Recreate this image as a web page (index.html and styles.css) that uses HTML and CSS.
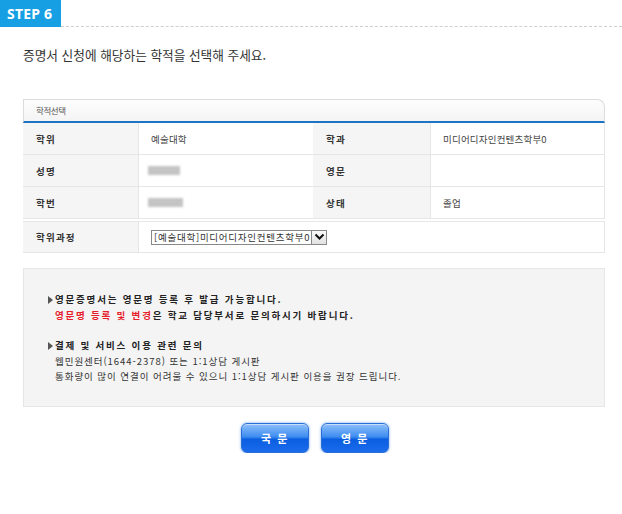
FILE: index.html
```html
<!DOCTYPE html>
<html lang="ko">
<head>
<meta charset="utf-8">
<link rel="stylesheet" href="styles.css">
</head>
<body>
<div class="step-head">
  <div class="badge">STEP 6</div>
  <div class="dash"></div>
</div>
<p class="title">증명서 신청에 해당하는 학적을 선택해 주세요.</p>

<div class="panel">
  <div class="panel-head">학적선택</div>
  <div class="grid">
    <div class="lab">학위</div><div class="val">예술대학</div>
    <div class="lab">학과</div><div class="val">미디어디자인컨텐츠학부0</div>
    <div class="lab">성명</div><div class="val"><span class="blur b1"></span></div>
    <div class="lab">영문</div><div class="val"></div>
    <div class="lab">학번</div><div class="val"><span class="blur b2"></span></div>
    <div class="lab">상태</div><div class="val">졸업</div>
  </div>
  <div class="course">
    <div class="lab">학위과정</div>
    <div class="val">
      <div class="select"><span class="sel-text">[예술대학]미디어디자인컨텐츠학부0</span><span class="sel-btn"><svg width="11" height="8" viewBox="0 0 11 8"><path d="M1.5 1.5 L5.5 5.5 L9.5 1.5" fill="none" stroke="#111" stroke-width="2"/></svg></span></div>
    </div>
  </div>
</div>

<div class="info">
  <p class="bullet strong">영문증명서는 영문명 등록 후 발급 가능합니다.</p>
  <p class="strong"><span class="red">영문명 등록 및 변경</span>은 학교 담당부서로 문의하시기 바랍니다.</p>
  <p class="bullet strong gap">결제 및 서비스 이용 관련 문의</p>
  <p>웹민원센터(1644-2378) 또는 1:1상담 게시판</p>
  <p>통화량이 많이 연결이 어려울 수 있으니 1:1상담 게시판 이용을 권장 드립니다.</p>
</div>

<div class="buttons">
  <button class="btn">국 문</button>
  <button class="btn">영 문</button>
</div>
</body>
</html>
```

FILE: styles.css
```css
* { box-sizing: border-box; }
body {
  margin: 0;
  background: #fff;
  font-family: "Noto Sans CJK KR", "Noto Sans", sans-serif;
  color: #333;
}
.step-head {
  display: flex;
  align-items: flex-end;
  height: 27px;
}
.badge {
  width: 61px;
  height: 27px;
  background: #16a0e3;
  color: #fff;
  font-family: "Noto Sans", sans-serif;
  font-weight: 700;
  font-size: 14px;
  line-height: 27px;
  padding-left: 7px;
  letter-spacing: 0.2px;
}
.dash {
  flex: 1;
  border-bottom: 1px dashed #cfcfcf;
}
.title {
  margin: 17px 0 0 23px;
  font-size: 12.7px;
  line-height: 21px;
  color: #333;
}
.panel {
  margin: 34px 17px 0 23px;
}
.panel-head {
  height: 24px;
  border: 1px solid #dcdcdc;
  border-bottom: 2px solid #1e74c4;
  border-top-right-radius: 8px;
  background: linear-gradient(#fdfdfd, #f4f4f4);
  font-size: 8.5px;
  line-height: 21px;
  padding-left: 12px;
  color: #555;
  letter-spacing: -0.4px;
}
.grid {
  display: grid;
  grid-template-columns: 116px 174px 118px 174px;
  grid-auto-rows: 32px;
}
.lab, .val {
  border-bottom: 1px solid #e6e6e6;
  display: flex;
  align-items: center;
  font-size: 9.5px;
}
.lab {
  background: #f5f5f5;
  font-weight: 700;
  padding-left: 13px;
  letter-spacing: 1.2px;
  color: #333;
  border-right: 1px solid #e6e6e6;
}
.val {
  padding-left: 12px;
  color: #444;
  background: #fff;
  letter-spacing: 0.2px;
}
.grid .val:nth-child(4n) {
  border-right: 1px solid #e6e6e6;
}
.course {
  display: grid;
  grid-template-columns: 116px 1fr;
  height: 32px;
  margin-top: 2px;
  border-top: 1px solid #e6e6e6;
}
.course .val {
  border-right: 1px solid #e6e6e6;
}
.blur {
  display: inline-block;
  height: 9px;
  background: #c4c4c4;
  filter: blur(1.2px);
  margin-left: -3px;
}
.b1 { width: 32px; }
.b2 { width: 35px; }
.select {
  display: flex;
  align-items: center;
  height: 15px;
  border: 1px solid #888;
  border-right: none;
  padding-left: 2px;
  font-size: 9.5px;
  color: #333;
  letter-spacing: 0.75px;
}
.sel-text { padding-right: 1px; }
.sel-btn {
  width: 16px;
  height: 15px;
  border: 1px solid #888;
  background: linear-gradient(#fafafa, #e2e2e2);
  display: flex;
  align-items: center;
  justify-content: center;
}
.info {
  margin: 15px 17px 0 23px;
  height: 139px;
  background: #f4f4f4;
  border: 1px solid #e6e6e6;
  padding: 23px 0 0 31px;
}
.info p {
  margin: 0;
  font-size: 9.5px;
  line-height: 15.5px;
  color: #333;
  letter-spacing: 0.95px;
}
.info .strong {
  font-weight: 700;
  letter-spacing: 1.8px;
  color: #222;
}
.info .gap { margin-top: 15px; }
.bullet { position: relative; }
.bullet::before {
  content: "";
  position: absolute;
  left: -7px;
  top: 4px;
  border-left: 5px solid #555;
  border-top: 4px solid transparent;
  border-bottom: 4px solid transparent;
}
.red { color: #e8202a; }
.buttons {
  display: flex;
  justify-content: center;
  gap: 12px;
  margin-top: 16px;
  padding-left: 8px;
}
.btn {
  width: 68px;
  height: 30px;
  border: 1px solid #2a6fd6;
  border-radius: 6px;
  background: linear-gradient(#8ec0fa 0%, #3f8df0 45%, #0b5ee0 55%, #1a6cec 100%);
  box-shadow: 0 0 2px 1px #bcd6f7, inset 0 1px 0 rgba(255,255,255,0.5);
  color: #fff;
  font-family: "Noto Sans CJK KR", sans-serif;
  font-weight: 700;
  font-size: 11px;
  letter-spacing: 1.5px;
  padding: 0;
}
```
